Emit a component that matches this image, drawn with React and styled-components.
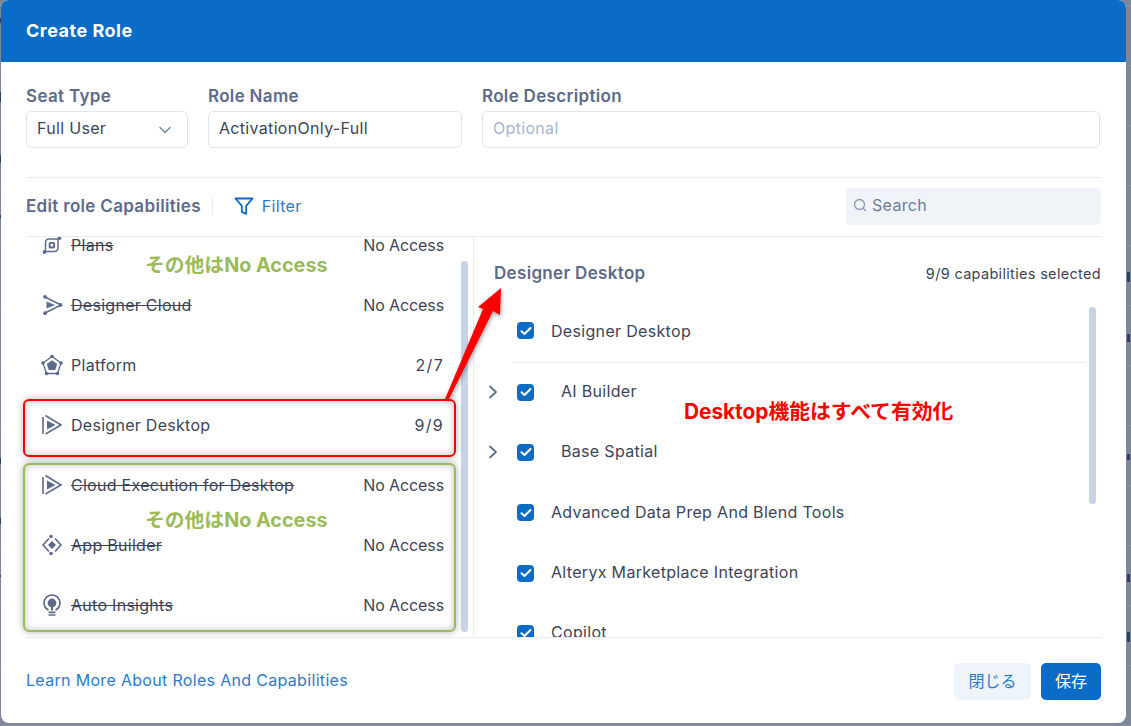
import React from 'react'
import styled, { createGlobalStyle } from 'styled-components'

const FONT = 'Inter, "Noto Sans CJK JP", sans-serif'

const GlobalStyle = createGlobalStyle`
  html, body {
    margin: 0;
    padding: 0;
    background: #7c8799;
  }
  * {
    box-sizing: border-box;
  }
`

const PlansIcon = () => (
  <svg width="24" height="24" viewBox="0 0 24 24" fill="none" stroke="#5d6b8a" strokeWidth="1.5">
    <path d="M6 18.500h8.500a3.500 3.500 0 0 0 3.500-3.500V6.500M5.500 18V9.500A3.500 3.500 0 0 1 9 6h9.500" />
    <rect x="8.700" y="9" width="6.400" height="6.400" rx="1.600" fill="#5d6b8a" stroke="none" />
    <rect x="10.500" y="10.800" width="2.800" height="2.800" rx="0.800" fill="#fff" stroke="none" />
    <circle cx="4.500" cy="19" r="1.900" fill="#5d6b8a" stroke="none" />
    <circle cx="19.500" cy="5" r="1.900" fill="#5d6b8a" stroke="none" />
  </svg>
)

const CloudIcon = () => (
  <svg width="24" height="24" viewBox="0 0 24 24" fill="none" stroke="#5d6b8a" strokeWidth="1.5">
    <path d="M5 4l16 8L5 20" />
    <path d="M6.500 8.500L15 12l-8.500 3.500z" fill="#5d6b8a" stroke="none" />
    <circle cx="5" cy="3.800" r="1.900" fill="#5d6b8a" stroke="none" />
    <circle cx="5" cy="20.200" r="1.900" fill="#5d6b8a" stroke="none" />
    <circle cx="20.500" cy="12" r="1.900" fill="#5d6b8a" stroke="none" />
  </svg>
)

const PlatformIcon = () => (
  <svg width="24" height="24" viewBox="0 0 24 24" fill="none" stroke="#5d6b8a" strokeWidth="1.3">
    <path d="M12 3.500l9 6.600-3.400 10.400H6.400L3 10.100z" />
    <path d="M12 7.200l5.200 3.800-2 6.100H8.800l-2-6.100z" fill="#5d6b8a" stroke="none" />
    <circle cx="12" cy="3.500" r="1.800" fill="#5d6b8a" stroke="none" />
    <circle cx="21" cy="10" r="1.800" fill="#5d6b8a" stroke="none" />
    <circle cx="3" cy="10" r="1.800" fill="#5d6b8a" stroke="none" />
    <circle cx="6.500" cy="20.500" r="1.800" fill="#5d6b8a" stroke="none" />
    <circle cx="17.500" cy="20.500" r="1.800" fill="#5d6b8a" stroke="none" />
  </svg>
)

const DesktopIcon = () => (
  <svg width="24" height="24" viewBox="0 0 24 24" fill="none" stroke="#5d6b8a" strokeWidth="1.600">
    <path d="M3 4v17" />
    <path d="M5.500 2.500L21 12 5.500 21" />
    <path d="M7 7.500L15.500 12 7 16.500z" fill="#5d6b8a" stroke="none" />
  </svg>
)

const AppBuilderIcon = () => (
  <svg width="24" height="24" viewBox="0 0 24 24" fill="none" stroke="#5d6b8a" strokeWidth="1.600">
    <path d="M9 5.500L3 12l6 6.500M15 5.500L21 12l-6 6.500" />
    <path d="M12 8l4 4-4 4-4-4z" fill="#5d6b8a" stroke="none" />
    <circle cx="11" cy="3.500" r="1.800" fill="#5d6b8a" stroke="none" />
    <circle cx="11" cy="20.500" r="1.800" fill="#5d6b8a" stroke="none" />
  </svg>
)

const InsightsIcon = () => (
  <svg width="24" height="24" viewBox="0 0 24 24" fill="none" stroke="#5d6b8a" strokeWidth="1.500">
    <path d="M8.500 17.200A8 8 0 1 1 15.500 17.200" />
    <circle cx="12" cy="10" r="4.400" fill="#5d6b8a" stroke="none" />
    <path d="M11 13h2v4.500h-2z" fill="#5d6b8a" stroke="none" />
    <path d="M8.500 19.300h7M8.500 22h7" strokeWidth="1.700" />
  </svg>
)

const CheckIcon = () => (
  <svg width="12" height="10" viewBox="0 0 12 10" fill="none" stroke="#fff" strokeWidth="2" strokeLinecap="round" strokeLinejoin="round">
    <path d="M1.500 5.200L4.500 8l6-6" />
  </svg>
)

const Chevron = () => (
  <svg width="10" height="14" viewBox="0 0 10 14" fill="none" stroke="#5d6b8a" strokeWidth="1.700" strokeLinecap="round" strokeLinejoin="round">
    <path d="M2 1.500L8 7l-6 5.500" />
  </svg>
)

const capabilities = [
  { name: 'Plans', value: 'No Access', off: true, icon: PlansIcon },
  { name: 'Designer Cloud', value: 'No Access', off: true, icon: CloudIcon },
  { name: 'Platform', value: '2/7', count: true, icon: PlatformIcon },
  { name: 'Designer Desktop', value: '9/9', count: true, icon: DesktopIcon },
  { name: 'Cloud Execution for Desktop', value: 'No Access', off: true, icon: DesktopIcon },
  { name: 'App Builder', value: 'No Access', off: true, icon: AppBuilderIcon },
  { name: 'Auto Insights', value: 'No Access', off: true, icon: InsightsIcon },
]

const details = [
  { name: 'AI Builder', expandable: true },
  { name: 'Base Spatial', expandable: true },
  { name: 'Advanced Data Prep And Blend Tools' },
  { name: 'Alteryx Marketplace Integration' },
  { name: 'Copilot' },
]

// slivers of the page behind the dialog, showing past its edges
const behindMarks = [
  { left: 1127, top: 272, height: 10 },
  { left: 1127, top: 334, height: 8 },
  { left: 1127, top: 454, height: 6 },
  { left: 1127, top: 574, height: 8 },
  { left: 1127, top: 632, height: 10 },
  { left: 0, top: 18, height: 5 },
  { left: 0, top: 92, height: 10 },
  { left: 0, top: 155, height: 8 },
  { left: 0, top: 215, height: 3 },
  { left: 0, top: 458, height: 6 },
  { left: 0, top: 518, height: 6 },
  { left: 0, top: 575, height: 2 },
]

export default function App() {
  return (
    <Page>
      <GlobalStyle />
      {behindMarks.map(mark => (
        <BehindMark key={mark.left + '-' + mark.top} $left={mark.left} $top={mark.top} $height={mark.height} />
      ))}
      <Modal>
        <Header>Create Role</Header>
        <FormRow>
          <Field>
            <Label>Seat Type</Label>
            <SelectBox>
              <span>Full User</span>
              <svg width="14" height="8" viewBox="0 0 14 8" fill="none" stroke="#75839f" strokeWidth="1.400" strokeLinecap="round" strokeLinejoin="round">
                <path d="M2 1.500l5 5 5-5" />
              </svg>
            </SelectBox>
          </Field>
          <Field>
            <Label>Role Name</Label>
            <TextInput defaultValue="ActivationOnly-Full" />
          </Field>
          <Field>
            <Label>Role Description</Label>
            <TextInput placeholder="Optional" />
          </Field>
        </FormRow>

        <Toolbar>
          <ToolbarTitle>Edit role Capabilities</ToolbarTitle>
          <FilterButton>
            <svg width="20" height="20" viewBox="0 0 20 20" fill="none" stroke="#0b6cc7" strokeWidth="1.800" strokeLinejoin="round">
              <path d="M1.500 2.500h17l-6.300 7.400v8l-4.400-2V9.900z" />
            </svg>
            Filter
          </FilterButton>
          <SearchBox>
            <svg width="14" height="14" viewBox="0 0 14 14" fill="none" stroke="#8c9ab8" strokeWidth="1.300" strokeLinecap="round">
              <circle cx="6.500" cy="6.500" r="5" />
              <path d="M10.200 10.200l2.300 2.300" />
            </svg>
            Search
          </SearchBox>
        </Toolbar>

        <Panes>
          <LeftPane>
            <CapabilityList>
              {capabilities.map(item => (
                <CapabilityRow key={item.name}>
                  <IconSlot>
                    <item.icon />
                  </IconSlot>
                  <CapabilityName $off={item.off}>{item.name}</CapabilityName>
                  <CapabilityValue $count={item.count}>{item.value}</CapabilityValue>
                </CapabilityRow>
              ))}
            </CapabilityList>
            <LeftThumb />
          </LeftPane>
          <RightPane>
            <DetailHeader>
              <DetailTitle>Designer Desktop</DetailTitle>
              <DetailCount>9/9 capabilities selected</DetailCount>
            </DetailHeader>
            <ParentRow>
              <Checkbox>
                <CheckIcon />
              </Checkbox>
              <DetailName>Designer Desktop</DetailName>
            </ParentRow>
            {details.map(item => (
              <DetailRow key={item.name}>
                <ChevronSlot>{item.expandable && <Chevron />}</ChevronSlot>
                <Checkbox>
                  <CheckIcon />
                </Checkbox>
                <DetailName $indent={item.expandable}>{item.name}</DetailName>
              </DetailRow>
            ))}
            <RightThumb />
          </RightPane>
        </Panes>

        <Footer>
          <LearnMore>Learn More About Roles And Capabilities</LearnMore>
          <Buttons>
            <CloseButton>閉じる</CloseButton>
            <SaveButton>保存</SaveButton>
          </Buttons>
        </Footer>
      </Modal>

      <RedBox />
      <GreenBox />
      <Arrow width="70" height="125" viewBox="0 0 70 125">
        <polygon points="3,113 41,23 36,21 59,2 58,29 51,25 7,113" fill="#ff0000" />
      </Arrow>
      <GreenNote $top={251}>その他はNo Access</GreenNote>
      <GreenNote $top={506}>その他はNo Access</GreenNote>
      <RedNote>Desktop機能はすべて有効化</RedNote>
    </Page>
  )
}

const Page = styled.div`
  position: relative;
  width: 1131px;
  height: 726px;
  overflow: hidden;
  padding-left: 1px;
  background: repeating-linear-gradient(
    to bottom,
    #7c8799 0,
    #7c8799 5px,
    #8a94a5 5px,
    #8a94a5 6px,
    #7c8799 6px,
    #7c8799 60px
  );
  font-family: ${FONT};
  letter-spacing: 0.32px;
`

const BehindMark = styled.div`
  position: absolute;
  top: ${props => props.$top}px;
  left: ${props => props.$left}px;
  width: ${props => (props.$left > 0 ? 3 : 1)}px;
  height: ${props => props.$height}px;
  background: #2f4166;
`

const Modal = styled.div`
  position: relative;
  display: flex;
  flex-direction: column;
  width: 1125px;
  height: 723px;
  background: #fff;
  border-radius: 8px;
  overflow: hidden;
`

const Header = styled.div`
  display: flex;
  align-items: center;
  flex: 0 0 62px;
  padding: 0 0 2px 25px;
  background: #0b6cc7;
  color: #fff;
  font-size: 18px;
  font-weight: 700;
  letter-spacing: 0.5px;
`

const FormRow = styled.div`
  display: grid;
  grid-template-columns: 162px 254px 618px;
  column-gap: 20px;
  height: 116px;
  margin: 0 25px;
  padding-top: 22px;
  border-bottom: 1px solid #e8ebf2;
`

const Field = styled.div`
  display: flex;
  flex-direction: column;
`

const Label = styled.div`
  height: 27px;
  padding-top: 1px;
  color: #5d6b8a;
  font-size: 17px;
  font-weight: 600;
  line-height: 22px;
`

const SelectBox = styled.div`
  display: flex;
  align-items: center;
  justify-content: space-between;
  height: 37px;
  padding: 0 15px 0 10px;
  border: 1px solid #dfe4ef;
  border-radius: 5px;
  color: #3c4557;
  font-size: 16px;

  span {
    margin-bottom: 3px;
  }
`

const TextInput = styled.input`
  height: 37px;
  padding: 0 10px 3px;
  border: 1px solid #dfe4ef;
  border-radius: 5px;
  outline: none;
  color: #3c4557;
  font-family: inherit;
  font-size: 16px;
  letter-spacing: inherit;

  &::placeholder {
    color: #a9b5cf;
    opacity: 1;
  }
`

const Toolbar = styled.div`
  display: flex;
  align-items: center;
  height: 59px;
  margin: 0 25px;
  padding-bottom: 2px;
  border-bottom: 1px solid #e8ebf2;
`

const ToolbarTitle = styled.div`
  margin-bottom: 1px;
  padding-right: 11px;
  border-right: 1px solid #e8ebf2;
  color: #5d6b8a;
  font-size: 17px;
  font-weight: 600;
  line-height: 18px;
`

const FilterButton = styled.div`
  display: flex;
  align-items: center;
  gap: 8px;
  margin-left: 21px;
  color: #2c7bcb;
  font-size: 16px;
`

const SearchBox = styled.div`
  display: flex;
  align-items: center;
  gap: 5px;
  width: 255px;
  height: 37px;
  margin-left: auto;
  padding: 0 0 2px 7px;
  border-radius: 4px;
  background: #f0f3f8;
  color: #6f7d9b;
  font-size: 16px;
`

const Panes = styled.div`
  display: flex;
  height: 401px;
  margin: 0 25px;
  border-bottom: 1px solid #e8ebf2;
  overflow: hidden;
`

const LeftPane = styled.div`
  position: relative;
  flex: 0 0 448px;
  border-right: 1px solid #e8ebf2;
  overflow: hidden;
`

const CapabilityList = styled.div`
  margin-top: -22px;
  padding: 0 29px 0 14px;
`

const CapabilityRow = styled.div`
  display: flex;
  align-items: center;
  height: 60px;
  line-height: 14px;
`

const IconSlot = styled.div`
  display: flex;
  flex: 0 0 32px;
  margin-right: -1px;
`

const CapabilityName = styled.div`
  flex: 1;
  color: #3c4557;
  font-size: 16px;
  letter-spacing: 0.28px;
  text-decoration: ${props => (props.$off ? 'line-through' : 'none')};
`

const CapabilityValue = styled.div`
  color: #3c4557;
  font-size: 16px;
  letter-spacing: ${props => (props.$count ? '1.3px' : '-0.1px')};
`

const LeftThumb = styled.div`
  position: absolute;
  top: 24px;
  left: 435px;
  width: 7px;
  height: 371px;
  border-radius: 4px;
  background: #c8d3e6;
`

const RightPane = styled.div`
  position: relative;
  flex: 1;
  overflow: hidden;
`

const DetailHeader = styled.div`
  display: flex;
  align-items: center;
  justify-content: space-between;
  height: 72px;
  padding-left: 20px;
`

const DetailTitle = styled.div`
  color: #5d6b8a;
  font-size: 17px;
  font-weight: 600;
`

const DetailCount = styled.div`
  color: #3c4557;
  font-size: 14.500px;
`

const ParentRow = styled.div`
  display: flex;
  align-items: center;
  height: 54px;
  margin: 0 16px 0 39px;
  padding: 0 0 10px 4px;
  border-bottom: 1px solid #e8ebf2;
`

const DetailRow = styled.div`
  display: flex;
  align-items: center;
  height: 60.300px;
  padding: 0 0 2px 14px;

  > div:last-child {
    margin-bottom: 2px;
  }
`

const ChevronSlot = styled.div`
  display: flex;
  flex: 0 0 29px;
`

const Checkbox = styled.div`
  display: flex;
  align-items: center;
  justify-content: center;
  flex: 0 0 17px;
  height: 17px;
  border-radius: 4px;
  background: #0b6cc7;
`

const DetailName = styled.div`
  margin-left: ${props => (props.$indent ? '27px' : '17px')};
  color: #3c4557;
  font-size: 16px;
`

const RightThumb = styled.div`
  position: absolute;
  top: 70px;
  left: 615px;
  width: 7px;
  height: 197px;
  border-radius: 4px;
  background: #c8d3e6;
`

const Footer = styled.div`
  display: flex;
  align-items: center;
  justify-content: space-between;
  flex: 1;
  margin: 0 25px;
  padding-top: 2px;
`

const LearnMore = styled.div`
  padding-bottom: 3px;
  color: #2c7bcb;
  font-size: 16px;
`

const Buttons = styled.div`
  display: flex;
  gap: 10px;
`

const CloseButton = styled.div`
  display: flex;
  align-items: center;
  justify-content: center;
  width: 77px;
  height: 37px;
  padding-bottom: 3px;
  border-radius: 5px;
  background: #eff4fb;
  color: #2c7bcb;
  font-size: 16px;
  letter-spacing: 0;
`

const SaveButton = styled.div`
  display: flex;
  align-items: center;
  justify-content: center;
  width: 60px;
  height: 37px;
  padding-bottom: 3px;
  border-radius: 5px;
  background: #0b6cc7;
  color: #fff;
  font-size: 16px;
  letter-spacing: 0;
`

const RedBox = styled.div`
  position: absolute;
  top: 399px;
  left: 23px;
  width: 433px;
  height: 58px;
  border: 2px solid #ff0000;
  border-radius: 6px;
  box-shadow: 0 0 7px rgba(0, 0, 0, 0.3), inset 0 0 7px rgba(0, 0, 0, 0.25);
`

const GreenBox = styled.div`
  position: absolute;
  top: 463px;
  left: 23px;
  width: 433px;
  height: 169px;
  border: 2px solid #9bbb59;
  border-radius: 6px;
  box-shadow: 0 0 7px rgba(0, 0, 0, 0.3), inset 0 0 7px rgba(0, 0, 0, 0.25);
`

const Arrow = styled.svg`
  position: absolute;
  top: 286px;
  left: 442px;
  filter: drop-shadow(1px 2px 2px rgba(0, 0, 0, 0.35));
`

const GreenNote = styled.div`
  position: absolute;
  top: ${props => props.$top}px;
  left: 145px;
  color: #9bbb59;
  font-size: 19.800px;
  font-weight: 700;
  line-height: 28px;
  letter-spacing: 0;
  white-space: nowrap;
`

const RedNote = styled.div`
  position: absolute;
  top: 399px;
  left: 684px;
  color: #ff0000;
  font-size: 20.800px;
  font-weight: 700;
  line-height: 26px;
  letter-spacing: 0;
  white-space: nowrap;
`
